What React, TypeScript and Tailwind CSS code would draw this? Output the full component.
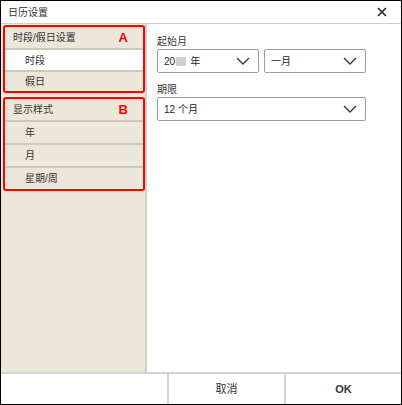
import React from 'react';

const FONT = '"Liberation Sans", "Noto Sans CJK SC", sans-serif';

const Chevron: React.FC = () => (
  <svg width="14" height="8" viewBox="0 0 14 8" fill="none">
    <path d="M1 1 L7 7 L13 1" stroke="#333" strokeWidth="1.3" />
  </svg>
);

const SelectBox: React.FC<{ width: string; children: React.ReactNode }> = ({ width, children }) => (
  <div
    className={`${width} h-[24px] flex items-center justify-between pl-[6px] pr-[8px] border border-[#9c9c9c] rounded-[2px] bg-white text-[10px] text-[#222]`}
  >
    <span className="flex items-center">{children}</span>
    <Chevron />
  </div>
);

interface Group {
  title: string;
  letter: string;
  headerH: string;
  items: { label: string; h: string; active?: boolean }[];
}

const groups: Group[] = [
  {
    title: '时段/假日设置',
    letter: 'A',
    headerH: 'h-[21px]',
    items: [
      { label: '时段', h: 'h-[20px]', active: true },
      { label: '假日', h: 'h-[19px]' }
    ]
  },
  {
    title: '显示样式',
    letter: 'B',
    headerH: 'h-[21px]',
    items: [
      { label: '年', h: 'h-[21px]' },
      { label: '月', h: 'h-[21px]' },
      { label: '星期/周', h: 'h-[21px]' }
    ]
  }
];

const App: React.FC = () => {
  return (
    <div
      className="w-[402px] h-[405px] bg-white border border-black flex flex-col text-[#333]"
      style={{ fontFamily: FONT }}
    >
      {/* title bar */}
      <div className="h-[23px] shrink-0 flex items-center justify-between pl-[7px] pr-[14px] border-b border-[#cfcfcf]">
        <span className="text-[10px]">日历设置</span>
        <svg width="10" height="10" viewBox="0 0 10 10">
          <path d="M1 1 L9 9 M9 1 L1 9" stroke="#222" strokeWidth="1.6" />
        </svg>
      </div>

      {/* body */}
      <div className="flex-1 flex min-h-0">
        <div className="w-[146px] shrink-0 bg-[#ede7d9] border-r-2 border-[#d3cfc7] pl-[2px] pt-[1px] flex flex-col gap-[4px]">
          {groups.map(g => (
            <div key={g.letter} className="border-2 border-[#ff0000] rounded-[3px] flex flex-col">
              <div className={`${g.headerH} flex items-center justify-between pl-[8px] pr-[15px] text-[10px]`}>
                <span>{g.title}</span>
                <span className="text-[#ff0000] font-bold text-[13px]">{g.letter}</span>
              </div>
              {g.items.map(item => (
                <div
                  key={item.label}
                  className={`${item.h} box-content border-t-2 border-[#cdc8bd] flex items-center pl-[20px] text-[10px] ${
                    item.active ? 'bg-white' : ''
                  }`}
                >
                  {item.label}
                </div>
              ))}
            </div>
          ))}
        </div>

        <div className="flex-1 pl-[10px] pt-[12px]">
          <div className="text-[10px] leading-[12px] mb-[1px]">起始月</div>
          <div className="flex gap-[5px]">
            <SelectBox width="w-[102px]">
              <span>20</span>
              <span className="inline-block w-[10px] h-[9px] bg-[#cfcfcf] mx-[1px]" />
              <span className="ml-[3px]">年</span>
            </SelectBox>
            <SelectBox width="w-[102px]">一月</SelectBox>
          </div>
          <div className="text-[10px] leading-[12px] mt-[11px] mb-[1px]">期限</div>
          <SelectBox width="w-[209px]">12 个月</SelectBox>
        </div>
      </div>

      {/* footer */}
      <div className="h-[32px] shrink-0 border-t-2 border-[#d6d3cd] flex">
        <div className="flex-1" />
        <div className="w-[117px] border-l-2 border-[#d6d3cd] flex items-center justify-center text-[11px]">取消</div>
        <div className="w-[117px] border-l-2 border-[#d6d3cd] flex items-center justify-center text-[11px] font-bold">OK</div>
      </div>
    </div>
  );
};

export default App;
